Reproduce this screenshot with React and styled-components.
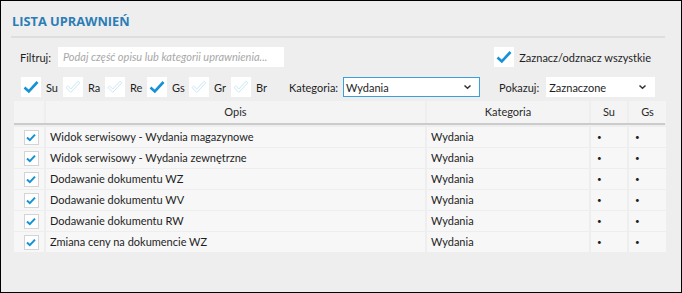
import React from "react";
import styled, { createGlobalStyle } from "styled-components";

const GlobalStyle = createGlobalStyle`
  html, body { margin: 0; padding: 0; }
  body { font-family: "Lato", "Liberation Sans", sans-serif; font-size: 11px; color: #1e1e1e; }
`;

const rows = [
  "Widok serwisowy - Wydania magazynowe",
  "Widok serwisowy - Wydania zewnętrzne",
  "Dodawanie dokumentu WZ",
  "Dodawanie dokumentu WV",
  "Dodawanie dokumentu RW",
  "Zmiana ceny na dokumencie WZ",
];

const roles = [
  { code: "Su", on: true },
  { code: "Ra", on: false },
  { code: "Re", on: false },
  { code: "Gs", on: true },
  { code: "Gr", on: false },
  { code: "Br", on: false },
];

// duży znacznik - pełny albo tylko blady kontur
const BigCheck = ({ on }) => (
  <svg width="16" height="14" viewBox="0 0 16 14">
    {on ? (
      <path d="M1.5 7.5 L5.8 11.5 L14.5 2" fill="none" stroke="#1592d6" strokeWidth="2.6" />
    ) : (
      <path
        d="M1 7.5 L2.6 6 L5.8 9 L13 1.2 L14.8 2.8 L5.8 12.4 Z"
        fill="none"
        stroke="#c4e4f4"
        strokeWidth="0.9"
        strokeLinejoin="round"
      />
    )}
  </svg>
);

const SmallCheck = () => (
  <svg width="10" height="9" viewBox="0 0 10 9">
    <path d="M1 4.6 L3.8 7.2 L9 1.6" fill="none" stroke="#1592d6" strokeWidth="2" />
  </svg>
);

const Chevron = () => (
  <svg width="9" height="6" viewBox="0 0 9 6">
    <path d="M1.5 1.5 L4.5 4.3 L7.5 1.5" fill="none" stroke="#333" strokeWidth="1.5" />
  </svg>
);

const columns = "30px 379px 162px 36px 37px";

const App = () => {
  return (
    <Frame>
      <GlobalStyle />
      <Title>LISTA UPRAWNIEŃ</Title>
      <Divider />
      <FilterRow>
        <Label>Filtruj:</Label>
        <SearchBox>Podaj część opisu lub kategorii uprawnienia...</SearchBox>
        <Spacer />
        <CheckItem>
          <Box>
            <BigCheck on />
          </Box>
          <span>Zaznacz/odznacz wszystkie</span>
        </CheckItem>
      </FilterRow>
      <OptionsRow>
        <Roles>
          {roles.map((r) => (
            <RoleItem key={r.code}>
              <Box>
                <BigCheck on={r.on} />
              </Box>
              <span>{r.code}</span>
            </RoleItem>
          ))}
        </Roles>
        <Label>Kategoria:</Label>
        <Select $focused $width={137}>
          <span>Wydania</span>
          <Chevron />
        </Select>
        <Label $ml={19}>Pokazuj:</Label>
        <Select $width={109} $ml={2}>
          <span>Zaznaczone</span>
          <Chevron />
        </Select>
      </OptionsRow>
      <Table>
        <HeadRow>
          <HeadCell />
          <HeadCell>Opis</HeadCell>
          <HeadCell>Kategoria</HeadCell>
          <HeadCell>Su</HeadCell>
          <HeadCell>Gs</HeadCell>
        </HeadRow>
        {rows.map((text) => (
          <Row key={text}>
            <Cell $center>
              <SmallBox>
                <SmallCheck />
              </SmallBox>
            </Cell>
            <Cell>{text}</Cell>
            <Cell>Wydania</Cell>
            <Cell $dot>•</Cell>
            <Cell $dot>•</Cell>
          </Row>
        ))}
      </Table>
    </Frame>
  );
};

const Frame = styled.div`
  width: 682px;
  height: 293px;
  box-sizing: border-box;
  border: 1px solid #000;
  background: #eeeeee;
  padding: 10px 16px 0 10px;
  overflow: hidden;
`;

const Title = styled.div`
  font-family: "Open Sans", "Noto Sans", sans-serif;
  font-weight: 700;
  font-size: 12.8px;
  color: #2b7db6;
  height: 21px;
  line-height: 21px;
  padding-left: 1px;
`;

const Divider = styled.div`
  height: 2px;
  background: #dedede;
  margin: 4px 0 0 0;
`;

const FilterRow = styled.div`
  display: flex;
  align-items: center;
  height: 22px;
  margin-top: 8px;
  padding: 0 14px 0 9px;
`;

const Label = styled.span`
  color: #1e1e1e;
  margin-left: ${(p) => p.$ml || 0}px;
  margin-right: 5px;
  white-space: nowrap;
`;

const SearchBox = styled.div`
  width: 221px;
  height: 20px;
  line-height: 20px;
  background: #fff;
  padding-left: 5px;
  margin-left: 2px;
  color: #a8a8a8;
  font-style: italic;
  white-space: nowrap;
  overflow: hidden;
`;

const Spacer = styled.div`
  flex: 1;
`;

const CheckItem = styled.label`
  display: flex;
  align-items: center;
  gap: 5px;
`;

const Box = styled.div`
  width: 20px;
  height: 20px;
  flex: none;
  background: #fff;
  display: flex;
  align-items: center;
  justify-content: center;
`;

const OptionsRow = styled.div`
  display: flex;
  align-items: center;
  height: 20px;
  margin-top: 9px;
  padding-left: 10px;
`;

const Roles = styled.div`
  display: flex;
  width: 268px;
`;

const RoleItem = styled.label`
  width: 42px;
  display: flex;
  align-items: center;
  gap: 5px;
`;

const Select = styled.div`
  width: ${(p) => p.$width}px;
  height: 20px;
  box-sizing: border-box;
  margin-left: ${(p) => p.$ml || 0}px;
  background: #fff;
  border: 1px solid ${(p) => (p.$focused ? "#3aa0dc" : "#fff")};
  display: flex;
  align-items: center;
  justify-content: space-between;
  padding: 0 7px 0 2px;
`;

const Table = styled.div`
  display: flex;
  flex-direction: column;
  gap: 1px;
  margin: 4px 0 0 3px;
`;

const HeadRow = styled.div`
  display: grid;
  grid-template-columns: ${columns};
  column-gap: 2px;
  height: 22px;
  border-bottom: 2px solid #cbcbcb;
  margin-bottom: 1px;
`;

const HeadCell = styled.div`
  background: #f4f4f4;
  line-height: 22px;
  text-align: center;
  color: #2a2a2a;
`;

const Row = styled.div`
  display: grid;
  grid-template-columns: ${columns};
  column-gap: 2px;
  height: 20px;
`;

const Cell = styled.div`
  background: #f7f7f7;
  line-height: 20px;
  padding-left: ${(p) => (p.$dot ? 6 : 4)}px;
  white-space: nowrap;
  display: ${(p) => (p.$center ? "flex" : "block")};
  align-items: center;
  justify-content: center;
  font-size: ${(p) => (p.$dot ? 8 : 11)}px;
`;

const SmallBox = styled.div`
  width: 13px;
  height: 13px;
  background: #fff;
  border: 1px solid #d4d4d4;
  display: flex;
  align-items: center;
  justify-content: center;
`;

export default App;
